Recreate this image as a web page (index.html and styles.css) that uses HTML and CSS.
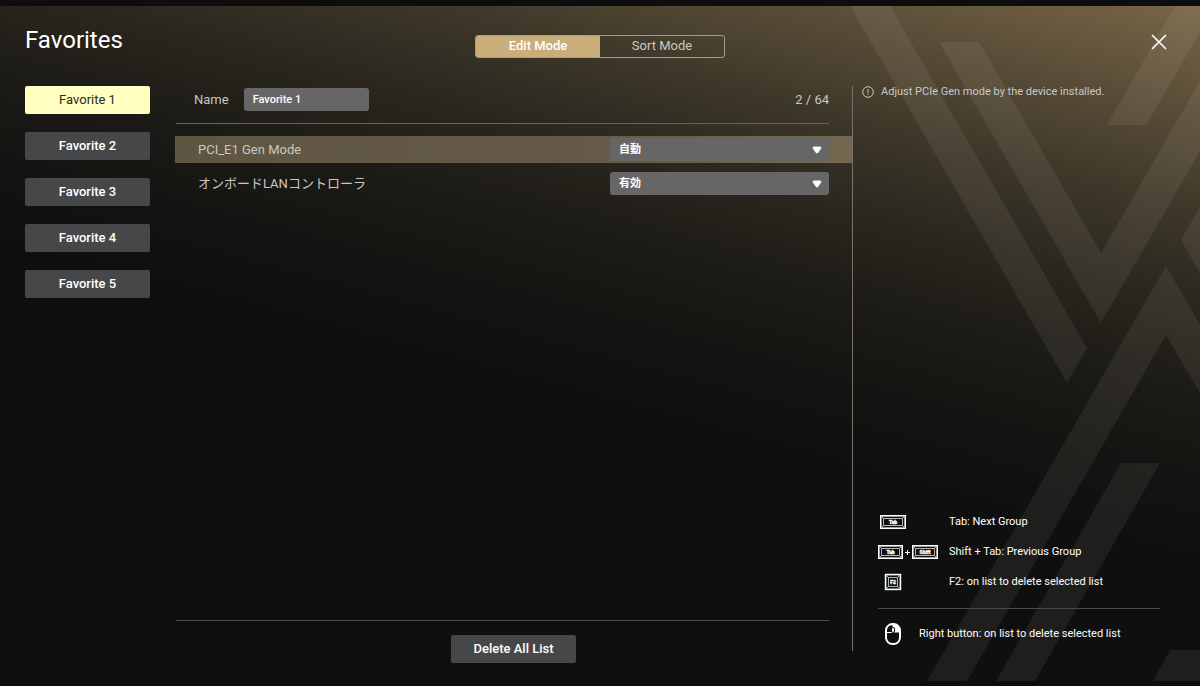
FILE: index.html
```html
<!DOCTYPE html>
<html lang="ja">
<head>
  <meta charset="UTF-8" />
  <meta name="viewport" content="width=device-width, initial-scale=1.0"/>
  <title>Favorites</title>
  <link rel="stylesheet" href="styles.css">
</head>
<body>
  <div class="dialog">
    <svg class="stripes" viewBox="0 0 360 675" preserveAspectRatio="xMaxYMin slice" aria-hidden="true">
      <path d="M10 0H50L247 342L227 377Z"/>
      <path d="M99 36H139L261 247L360 75V145L261 317Z"/>
      <path d="M335 0H360V26L306 119H267Z"/>
      <path d="M360 201L341 234L360 267Z"/>
      <path d="M326 260L360 319V387L326 329L127 675H87Z"/>
      <path d="M281 457H320L195 675H156Z"/>
      <path d="M330 644H360V675H313Z"/>
    </svg>

    <header class="header">
      <h1>Favorites</h1>
      <div class="mode-switch">
        <button type="button" class="mode active">Edit Mode</button>
        <button type="button" class="mode">Sort Mode</button>
      </div>
      <button type="button" class="close" aria-label="Close">
        <svg width="16" height="16" viewBox="0 0 16 16"><path d="M1 1L15 15M15 1L1 15"/></svg>
      </button>
    </header>

    <div class="content">
      <nav class="lists">
        <button type="button" class="btn selected">Favorite 1</button>
        <button type="button" class="btn">Favorite 2</button>
        <button type="button" class="btn">Favorite 3</button>
        <button type="button" class="btn">Favorite 4</button>
        <button type="button" class="btn">Favorite 5</button>
      </nav>

      <main class="editor">
        <div class="name-row">
          <label for="listName">Name</label>
          <input type="text" id="listName" value="Favorite 1">
          <span class="count">2 / 64</span>
        </div>

        <div class="settings">
          <div class="setting current">
            <label for="pcieGen">PCI_E1 Gen Mode</label>
            <div class="select">
              <select id="pcieGen"><option>自動</option></select>
              <svg class="caret" width="10" height="8" viewBox="0 0 10 8"><path d="M1.5 1H8.5L9 2L5.5 7H4.5L1 2Z"/></svg>
            </div>
          </div>
          <div class="setting">
            <label for="lanController">オンボードLANコントローラ</label>
            <div class="select">
              <select id="lanController"><option>有効</option></select>
              <svg class="caret" width="10" height="8" viewBox="0 0 10 8"><path d="M1.5 1H8.5L9 2L5.5 7H4.5L1 2Z"/></svg>
            </div>
          </div>
        </div>

        <div class="footer">
          <button type="button" class="btn">Delete All List</button>
        </div>
      </main>

      <aside class="help">
        <p class="description">
          <svg width="12" height="12" viewBox="0 0 12 12"><circle cx="6" cy="6" r="5.3"/><path d="M6 3V7M6 8V9"/></svg>
          Adjust PCIe Gen mode by the device installed.
        </p>

        <div class="shortcuts">
          <div class="shortcut">
            <div class="keys">
              <svg width="30" height="18" viewBox="0 0 30 18">
                <rect class="cap" x="2.8" y="2.8" width="24.4" height="12.4"/>
                <rect class="face" x="5.5" y="5.5" width="19" height="7"/>
                <path class="edge" d="M3 3L6 6M27 3L24 6M3 15L6 12M27 15L24 12"/>
                <text x="15" y="11">Tab</text>
              </svg>
            </div>
            <span>Tab: Next Group</span>
          </div>
          <div class="shortcut">
            <div class="keys">
              <svg width="60" height="18" viewBox="0 0 60 18">
                <rect class="cap" x="0.8" y="2.8" width="23.4" height="12.4"/>
                <rect class="face" x="3.5" y="5.5" width="18" height="7"/>
                <path class="edge" d="M1 3L4 6M24 3L21 6M1 15L4 12M24 15L21 12"/>
                <text x="12.5" y="11">Tab</text>
                <path class="plus" d="M27 9.5H32M29.5 7V12"/>
                <rect class="cap" x="34.8" y="2.8" width="24.4" height="12.4"/>
                <rect class="face" x="37.5" y="5.5" width="19" height="7"/>
                <path class="edge" d="M35 3L38 6M59 3L56 6M35 15L38 12M59 15L56 12"/>
                <text x="47" y="11">Shift</text>
              </svg>
            </div>
            <span>Shift + Tab: Previous Group</span>
          </div>
          <div class="shortcut">
            <div class="keys">
              <svg width="30" height="18" viewBox="0 0 30 18">
                <rect class="cap" x="7.6" y="1.6" width="14.8" height="14.8"/>
                <rect class="face" x="10.5" y="4.5" width="9" height="9"/>
                <path class="edge" d="M8 2L11 5M22 2L19 5M8 16L11 13M22 16L19 13"/>
                <text x="15" y="11">F2</text>
              </svg>
            </div>
            <span>F2: on list to delete selected list</span>
          </div>
        </div>

        <div class="mouse">
          <svg width="30" height="24" viewBox="0 0 30 24">
            <rect class="mouse-body" x="8" y="2" width="14" height="20" rx="6.5"/>
            <path class="mouse-button" d="M15 2C19 2 22 4.500 22 8.500V10.500H15Z"/>
            <path class="mouse-line" d="M8 10.500H15M15 2V5"/>
            <rect class="mouse-wheel" x="13.5" y="5.5" width="3" height="5" rx="1.5"/>
          </svg>
          <span>Right button: on list to delete selected list</span>
        </div>
      </aside>
    </div>
  </div>
</body>
</html>
```
FILE: styles.css
```css
* {
  box-sizing: border-box;
}
body {
  margin: 0;
  min-height: 100vh;
  padding: 6px 0 5px;
  display: flex;
  background: #0d0d0d;
  color: #c8c8c6;
  font-family: Roboto, "Noto Sans CJK JP", sans-serif;
  font-size: 13px;
  line-height: 16px;
}
button, input, select {
  font: inherit;
  color: white;
  border: none;
  margin: 0;
}
button {
  cursor: pointer;
}
svg {
  display: block;
  flex: none;
}

/* --- Dialog --- */
.dialog {
  position: relative;
  flex: 1;
  display: flex;
  flex-direction: column;
  background: linear-gradient(195deg, #776546 0%, #5c4f39 10%, #3d3729 21%, #2b271f 30%, #1e1c17 38%, #141412 47%, #0f0f0f 56%);
}
.stripes {
  position: absolute;
  top: 0;
  right: 0;
  width: 360px;
  height: 100%;
  fill: rgba(255, 245, 225, 0.07);
}

/* --- Header --- */
.header {
  position: relative;
  display: grid;
  grid-template-columns: 1fr auto 1fr;
  align-items: center;
  height: 80px;
  padding: 0 25px;
}
.header h1 {
  margin: 0;
  padding-bottom: 12px;
  color: white;
  font-size: 24px;
  font-weight: normal;
  line-height: 32px;
}
.mode-switch {
  display: flex;
  border: 1px solid #a39c90;
  border-radius: 3px;
  overflow: hidden;
}
.mode {
  width: 124px;
  height: 21px;
  padding: 0;
  background: none;
  color: #c8c8c6;
}
.mode.active {
  background: #c9ae7c;
  color: white;
  font-weight: 500;
}
.close {
  justify-self: end;
  padding: 0 8px 8px 0;
  background: none;
}
.close svg {
  fill: none;
  stroke: white;
  stroke-width: 1.6;
}

/* --- Columns --- */
.content {
  position: relative;
  flex: 1;
  display: flex;
  padding: 0 0 18px 25px;
}
.lists {
  display: flex;
  flex-direction: column;
  gap: 18px;
  margin-right: 25px;
}
.btn {
  width: 125px;
  height: 28px;
  padding: 0;
  background: #464748;
  border-radius: 2px;
  font-weight: 500;
}
.btn.selected {
  background: #ffffc0;
  color: #2a2a22;
  font-weight: normal;
}

/* --- Editor --- */
.editor {
  flex: 1;
  display: flex;
  flex-direction: column;
}
.name-row {
  display: flex;
  align-items: center;
  gap: 15px;
  margin: 0 23px 0 1px;
  padding: 2px 0 12px 18px;
  border-bottom: 1px solid #68645c;
}
.name-row input {
  width: 125px;
  height: 23px;
  padding: 0 9px;
  background: #666;
  border-radius: 3px;
  font-size: 11px;
  font-weight: 500;
}
.count {
  margin-left: auto;
}
.settings {
  flex: 1;
  display: flex;
  flex-direction: column;
  gap: 7px;
  padding-top: 12px;
}
.setting {
  display: flex;
  align-items: center;
  justify-content: space-between;
  height: 27px;
  padding: 0 23px;
}
.setting.current {
  background: linear-gradient(90deg, #5f5543, #655a48 60%, #756850);
}
.select {
  position: relative;
  width: 219px;
}
.select select {
  display: block;
  width: 100%;
  height: 23px;
  padding: 0 9px;
  appearance: none;
  background: #666;
  border-radius: 3px;
  font-size: 11px;
  font-weight: bold;
}
.caret {
  position: absolute;
  top: 8px;
  right: 7px;
  fill: white;
  stroke: white;
  stroke-linejoin: round;
  pointer-events: none;
}
.footer {
  display: flex;
  justify-content: center;
  position: relative;
  padding-top: 15px;
}
.footer::before {
  content: "";
  position: absolute;
  top: 0;
  left: 1px;
  right: 23px;
  border-top: 1px solid #4a4b4a;
}

/* --- Help --- */
.help {
  display: flex;
  flex-direction: column;
  justify-content: space-between;
  width: 348px;
  margin-bottom: 12px;
  border-left: 1px solid #77736b;
  color: white;
  font-size: 11px;
}
.description {
  display: flex;
  align-items: center;
  gap: 7px;
  margin: 0 0 auto;
  padding-left: 9px;
  color: #c8c8c6;
  line-height: 12px;
}
.description svg {
  fill: none;
  stroke: #c8c8c6;
}
.shortcuts {
  display: flex;
  flex-direction: column;
  gap: 12px;
  margin: 0 40px 0 25px;
  padding-bottom: 17px;
  border-bottom: 1px solid #4a4a49;
}
.shortcut, .mouse {
  display: flex;
  align-items: center;
  gap: 11px;
}
.keys {
  width: 60px;
}
.mouse {
  margin: 13px 0 5px 25px;
}

/* --- Key caps and mouse icon --- */
.cap {
  fill: #0f0f0f;
  stroke: white;
  stroke-width: 1.6;
}
.face {
  fill: none;
  stroke: #b4b4b4;
}
.edge {
  stroke: #b4b4b4;
}
.plus {
  stroke: white;
}
.keys text {
  fill: white;
  stroke: white;
  stroke-width: 0.3;
  font-size: 5px;
  font-weight: 900;
  text-anchor: middle;
}
.mouse-body {
  fill: none;
  stroke: white;
  stroke-width: 2;
}
.mouse-button {
  fill: white;
}
.mouse-line {
  fill: none;
  stroke: white;
}
.mouse-wheel {
  fill: white;
  stroke: #0f0f0f;
}
```
